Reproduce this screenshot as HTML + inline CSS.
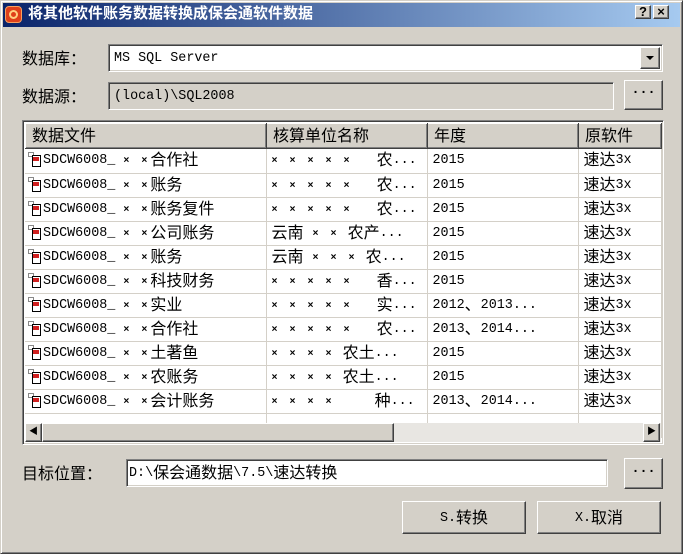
<!DOCTYPE html>
<html><head><meta charset="utf-8"><style>
*{box-sizing:border-box;margin:0;padding:0}
body{width:683px;height:554px;background:#d4d0c8;position:relative;overflow:hidden;font-family:"Liberation Mono","Noto Sans CJK SC",monospace;font-size:13.4px;line-height:16px;color:#000}
.c{font-family:"Noto Sans CJK SC","Liberation Sans",sans-serif;font-size:16px;line-height:16px;vertical-align:top;position:relative;top:-3px}
.w{vertical-align:top}
.a{position:absolute}
.win{left:0;top:0;width:683px;height:554px;border:1px solid;border-color:#d4d0c8 #404040 #404040 #d4d0c8;box-shadow:inset 1px 1px 0 #fff,inset -1px -1px 0 #808080}
.title{left:3px;top:3px;width:677px;height:24px;background:linear-gradient(90deg,#0a246a,#a6caf0);color:#fff;font-weight:bold;font-family:"Liberation Sans","Noto Sans CJK SC",sans-serif;font-size:15px;padding:5px 0 0 25px}
.title .c{font-size:15px;font-weight:bold}
.sunk{border:1px solid;border-color:#808080 #fff #fff #808080;box-shadow:inset 1px 1px 0 #404040,inset -1px -1px 0 #d4d0c8}
.btn{border:1px solid;border-color:#fff #404040 #404040 #fff;box-shadow:inset -1px -1px 0 #808080;background:#d4d0c8;text-align:center}
.sb{width:16px;height:14px;top:5px;font-size:13px;line-height:12px;font-weight:bold;font-family:"Liberation Sans",sans-serif}
table{border-collapse:collapse;table-layout:fixed}
td{height:24px;border-right:1px solid #d4d0c8;border-bottom:1px solid #d4d0c8;white-space:nowrap;overflow:hidden;padding:4px 0 0 5px;vertical-align:top}
.x{font-size:10px;line-height:0;letter-spacing:3px;font-weight:bold}
.ic{display:inline-block;width:14px;height:15px;vertical-align:top;position:relative;top:-1px;margin-right:1px}
th{height:25px;font-weight:normal;text-align:left;padding:5px 0 0 6px;vertical-align:top;border:1px solid;border-color:#fff #404040 #404040 #fff;box-shadow:inset -1px -1px 0 #808080;background:#d4d0c8}
</style></head><body>
<div class="a win"></div>
<div class="a title">将其他软件账务数据转换成保会通软件数据</div>
<div class="a" style="left:5px;top:6px;width:17px;height:17px;background:#e0401a;border-radius:4px;border:1px solid #f8a060"><div style="position:absolute;left:3px;top:3px;width:9px;height:9px;border:2px solid #ffd080;border-radius:50%"></div></div>
<div class="a btn sb" style="left:635px">?</div>
<div class="a btn sb" style="left:653px">×</div>

<div class="a" style="left:22px;top:52px">数据库：</div>
<div class="a sunk" style="left:108px;top:44px;width:555px;height:28px;background:#fff;padding:6px 0 0 5px">MS SQL Server</div>
<div class="a btn" style="left:640px;top:47px;width:20px;height:22px"><div style="margin:8px auto 0;width:0;height:0;border-left:4px solid transparent;border-right:4px solid transparent;border-top:4px solid #000"></div></div>

<div class="a" style="left:22px;top:90px">数据源：</div>
<div class="a sunk" style="left:108px;top:82px;width:506px;height:28px;padding:6px 0 0 5px">(local)\SQL2008</div>
<div class="a btn" style="left:624px;top:80px;width:39px;height:30px;padding-top:5px;font-weight:bold">···</div>

<div class="a sunk" style="left:22px;top:120px;width:642px;height:325px;background:#fff;padding:2px;overflow:hidden">
<table style="width:636px">
<colgroup><col style="width:241px"><col style="width:161px"><col style="width:151px"><col style="width:83px"></colgroup>
<tr><th>数据文件</th><th>核算单位名称</th><th>年度</th><th>原软件</th></tr>
</table>
<table style="width:636px">
<colgroup><col style="width:241px"><col style="width:161px"><col style="width:151px"><col style="width:83px"></colgroup>
<tbody id="r"></tbody>
</table>
</div>
<div class="a" style="left:25px;top:423px;width:636px;height:19px;background:#e8e6e2"></div>
<div class="a btn" style="left:25px;top:423px;width:17px;height:19px;font-size:9px;line-height:17px">◀</div>
<div class="a btn" style="left:42px;top:423px;width:352px;height:19px"></div>
<div class="a btn" style="left:643px;top:423px;width:17px;height:19px;font-size:9px;line-height:17px">▶</div>

<div class="a" style="left:22px;top:467px">目标位置：</div>
<div class="a sunk" style="left:126px;top:459px;width:482px;height:28px;background:#fff;padding:6px 0 0 2px">D:\保会通数据\7.5\速达转换</div>
<div class="a btn" style="left:624px;top:458px;width:39px;height:31px;padding-top:6px;font-weight:bold">···</div>

<div class="a btn" style="left:402px;top:501px;width:124px;height:33px;padding-top:9px">S.转换</div>
<div class="a btn" style="left:537px;top:501px;width:124px;height:33px;padding-top:9px">X.取消</div>
<script>
var d=[["合作社","× × × × ×","　农...","2015"],["账务","× × × × ×","　农...","2015"],["账务复件","× × × × ×","　农...","2015"],["公司账务","云南 × ×","农产...","2015"],["账务","云南 × × ×","农...","2015"],["科技财务","× × × × ×","　香...","2015"],["实业","× × × × ×","　实...","2012、2013..."],["合作社","× × × × ×","　农...","2013、2014..."],["土著鱼","× × × ×","农土...","2015"],["农账务","× × × ×","农土...","2015"],["会计账务","× × × ×","　　种...","2013、2014..."]];
var h="";var ic='<span class="ic"><span style="position:absolute;left:0;top:0;width:6px;height:5px;border:1px solid #888;background:#fff"></span><span style="position:absolute;left:4px;top:3px;width:9px;height:12px;border:1px solid #000;background:#fff"></span><span style="position:absolute;left:5px;top:5px;width:6px;height:4px;background:#d02020"></span></span>';
d.forEach(function(r){h+='<tr><td style="padding-left:3px">'+ic+'SDCW6008_ <span class="x">× ×</span>'+r[0]+'</td><td><span class="x">'+r[1].replace('云南','</span>云南<span class="x">')+'</span> '+r[2]+'</td><td>'+r[3]+'</td><td>速达3x</td></tr>';});
h+='<tr><td></td><td></td><td></td><td></td></tr>';
document.getElementById('r').innerHTML=h;
(function w(n){if(n.nodeType==3){var t=n.nodeValue;if(/[\u3000-\u9fff\uff00-\uffef]/.test(t)){var s=document.createElement('span');s.className='w';s.innerHTML=t.replace(/&/g,'&amp;').replace(/</g,'&lt;').replace(/([\u3000-\u9fff\uff00-\uffef]+)/g,'<span class="c">$1</span>');n.parentNode.replaceChild(s,n);}}else if(n.nodeName!='SCRIPT'){[].slice.call(n.childNodes).forEach(w);}})(document.body);
</script>
</body></html>
